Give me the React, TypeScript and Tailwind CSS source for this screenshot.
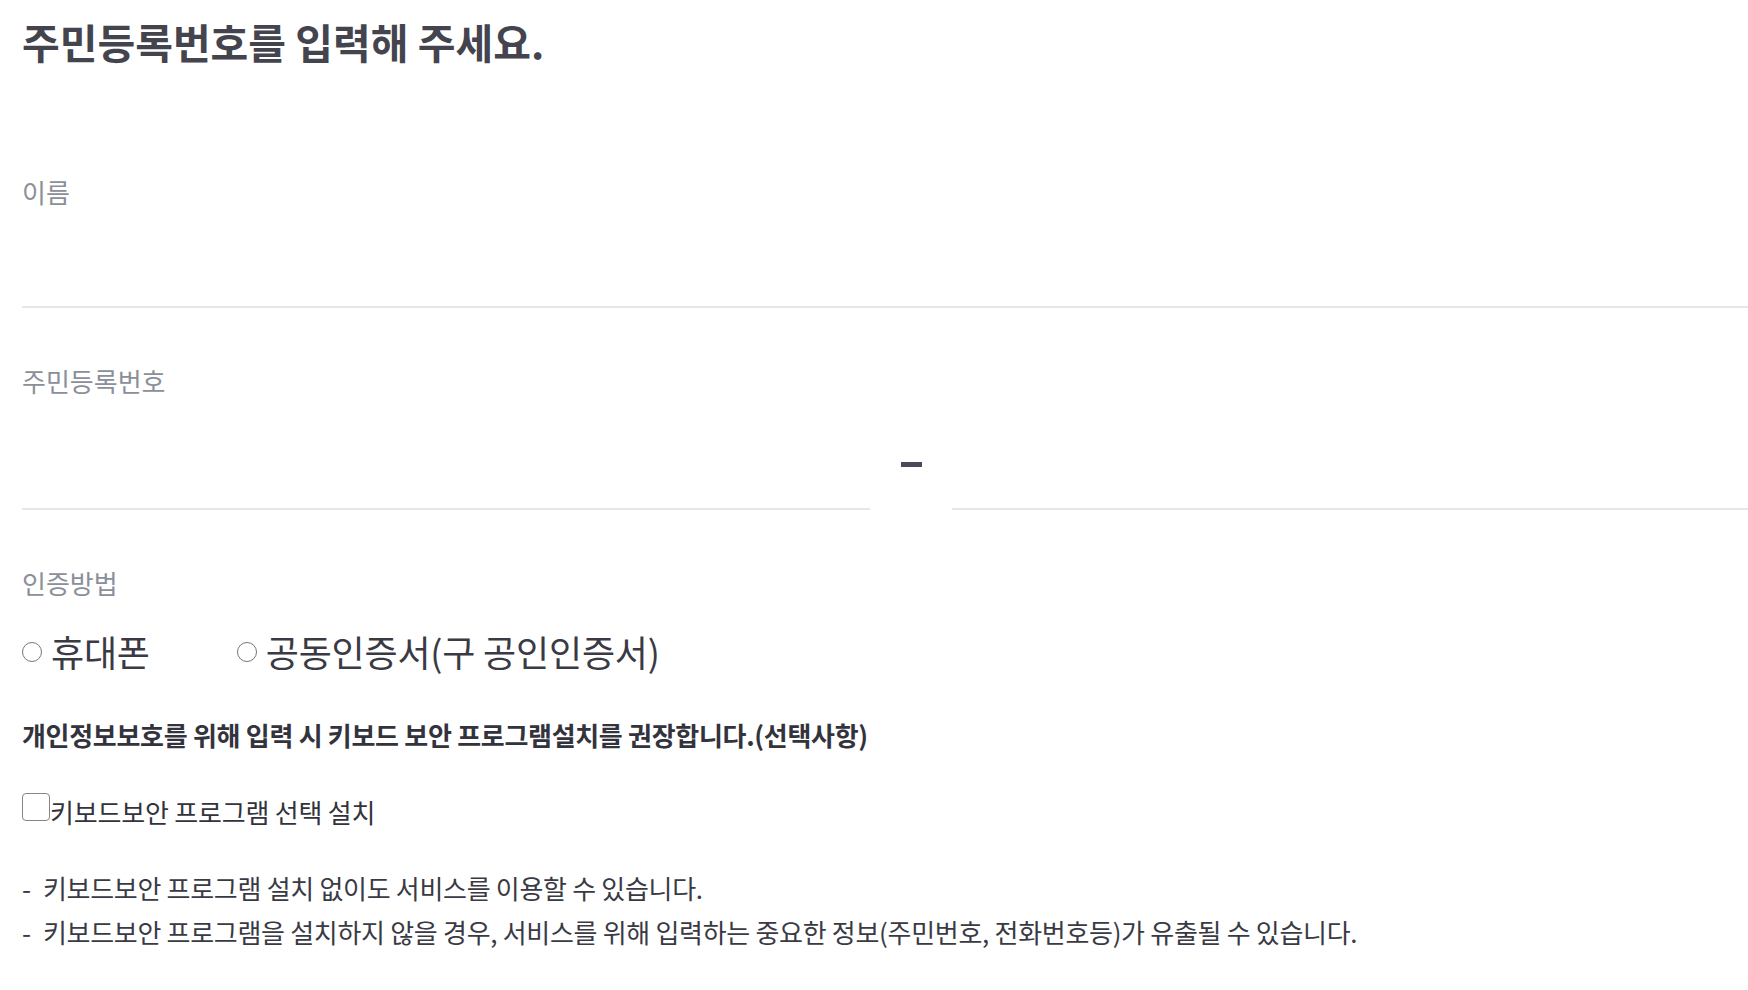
const font = "font-['Noto_Sans_CJK_KR','Noto_Sans',sans-serif]"

const Radio = ({ label }: { label: string }) => {
  return (
    <label className="flex items-center">
      <span className="w-[20px] h-[20px] rounded-full border border-[#767676] bg-white shrink-0" />
      <span className="ml-[9px] text-[36px] leading-[33px] text-[#3a3a44] tracking-[-0.2px]">{label}</span>
    </label>
  )
}

const App = () => {
  return (
    <div className={`${font} bg-white min-h-[990px] w-[1748px] overflow-hidden pl-[22px] pt-[21px] text-[#3a3a44]`}>
      <h1 className="text-[41px] leading-[41px] font-bold text-[#44444e]">
        주민등록번호를 입력해 주세요.
      </h1>

      <div className="mt-[118px]">
        <div className="text-[26px] leading-[24px] text-[#8a8f99]">이름</div>
        <div className="h-[104px] border-b-2 border-[#e6e6e6]" />
      </div>

      <div className="mt-[61px]">
        <div className="text-[26px] leading-[24px] text-[#8a8f99]">주민등록번호</div>
        <div className="flex items-end h-[117px]">
          <div className="w-[848px] h-full border-b-2 border-[#e6e6e6]" />
          <div className="w-[82px] h-full flex items-center justify-center">
            <span className="w-[21px] h-[5px] bg-[#4a4a58] mt-[26px]" />
          </div>
          <div className="flex-1 h-full border-b-2 border-[#e6e6e6]" />
        </div>
      </div>

      <div className="mt-[61px] text-[26px] leading-[24px] text-[#8a8f99]">인증방법</div>

      <div className="mt-[40px] flex items-center">
        <Radio label="휴대폰" />
        <div className="ml-[87px]">
          <Radio label="공동인증서(구 공인인증서)" />
        </div>
      </div>

      <p className="mt-[55px] text-[26px] leading-[24px] font-bold text-[#33333d] tracking-[-0.3px]">
        개인정보보호를 위해 입력 시 키보드 보안 프로그램설치를 권장합니다.(선택사항)
      </p>

      <label className="mt-[46px] flex items-end">
        <span className="w-[28px] h-[28px] rounded-[4px] border-[1.5px] border-[#858585] bg-white shrink-0 mb-[3px]" />
        <span className="text-[26px] leading-[24px] text-[#33333d] tracking-[-0.2px]">키보드보안 프로그램 선택 설치</span>
      </label>

      <ul className="mt-[52px] flex flex-col gap-[20px] text-[26px] leading-[24px] text-[#3a3a44] tracking-[-0.3px]">
        <li className="flex">
          <span className="w-[21px]">-</span>
          <span>키보드보안 프로그램 설치 없이도 서비스를 이용할 수 있습니다.</span>
        </li>
        <li className="flex">
          <span className="w-[21px]">-</span>
          <span>키보드보안 프로그램을 설치하지 않을 경우, 서비스를 위해 입력하는 중요한 정보(주민번호, 전화번호등)가 유출될 수 있습니다.</span>
        </li>
      </ul>
    </div>
  )
}

export default App
